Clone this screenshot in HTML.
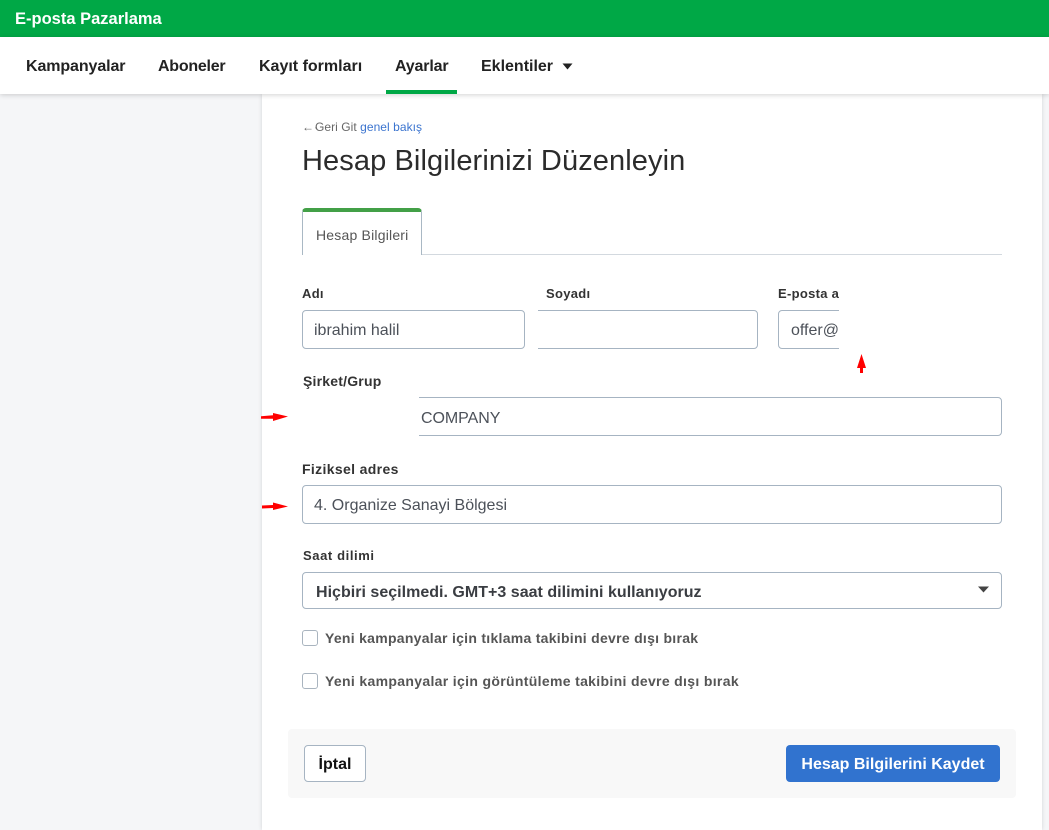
<!DOCTYPE html>
<html lang="tr">
<head>
<meta charset="utf-8">
<title>Hesap Bilgilerinizi Düzenleyin</title>
<style>
html,body{margin:0;padding:0;width:1049px;height:830px;overflow:hidden;background:#f5f6f8;font-family:"Liberation Sans",sans-serif;color:#2b2b2b}
.a{position:absolute;white-space:nowrap}
.panel{position:absolute;left:262px;top:94px;width:780px;height:736px;background:#fff;box-shadow:0 0 4px rgba(0,0,0,.14)}
.top{position:absolute;left:0;top:0;width:1049px;height:37px;background:#00a846}
.nav{position:absolute;left:0;top:37px;width:1049px;height:57px;background:#fff;box-shadow:0 1px 5px rgba(0,0,0,.18)}
.nv{font-size:16px;font-weight:bold;color:#222;top:58px;line-height:18px}
.lb{font-size:13px;font-weight:bold;color:#333;line-height:16px;letter-spacing:.3px}
.in{position:absolute;box-sizing:border-box;border:1px solid #a6b4c2;border-radius:4px;background:#fff;height:39px;font-size:16px;line-height:39px;color:#4c5159;padding-left:11px;white-space:nowrap}
.cb{position:absolute;left:302px;width:16px;height:16px;box-sizing:border-box;border:1px solid #a9b4bf;border-radius:3px;background:#fff}
.cl{font-size:14px;font-weight:bold;color:#555;line-height:16px;left:325px;letter-spacing:.28px}
.cover{position:absolute;background:#fff}
</style>
</head>
<body>
<div class="panel"></div>
<div class="top"></div>
<div class="a" style="left:15px;top:10px;font-size:16.5px;line-height:18px;font-weight:bold;color:#fff">E-posta Pazarlama</div>
<div class="nav"></div>
<div class="a nv" style="left:26px;letter-spacing:-.1px">Kampanyalar</div>
<div class="a nv" style="left:158px;letter-spacing:-.25px">Aboneler</div>
<div class="a nv" style="left:259px">Kayıt formları</div>
<div class="a nv" style="left:395px;letter-spacing:-.15px">Ayarlar</div>
<div class="a nv" style="left:481px">Eklentiler</div>
<svg class="a" style="left:562px;top:63px" width="11" height="7" viewBox="0 0 11 7"><path d="M0.5 0.5H10.5L5.5 6.5Z" fill="#222"/></svg>
<div class="a" style="left:386px;top:90px;width:71px;height:4px;background:#00a846"></div>

<div class="a" style="left:302px;top:120px;font-size:12px;line-height:14px;color:#666">←·</div>
<div class="a" style="left:315px;top:120px;font-size:12px;line-height:14px;color:#666;letter-spacing:.05px">Geri Git <span style="color:#3b74cf">genel bakış</span></div>
<div class="a" style="left:302px;top:144px;font-size:29px;line-height:34px;color:#2b2b2b;letter-spacing:.1px">Hesap Bilgilerinizi Düzenleyin</div>

<div class="a" style="left:302px;top:254px;width:700px;height:1px;background:#d3d9df"></div>
<div class="a" style="left:302px;top:208px;width:120px;height:47px;box-sizing:border-box;background:#fff;border:1px solid #a9b8c4;border-top:4px solid #43a047;border-bottom:none;border-radius:4px 4px 0 0"></div>
<div class="a" style="left:316px;top:228px;font-size:14px;line-height:15px;color:#555;letter-spacing:.2px">Hesap Bilgileri</div>

<div class="a lb" style="left:302px;top:286px">Adı</div>
<div class="a lb" style="left:546px;top:286px">Soyadı</div>
<div class="a lb" style="left:778px;top:286px">E-posta a</div>
<div class="cover" style="left:839px;top:280px;width:20px;height:24px"></div>

<div class="in" style="left:302px;top:310px;width:223px">ibrahim halil</div>
<div class="in" style="left:530px;top:310px;width:228px"></div>
<div class="cover" style="left:525px;top:305px;width:13px;height:50px"></div>
<div class="in" style="left:778px;top:310px;width:100px;padding-left:12px">offer@</div>
<div class="cover" style="left:839px;top:305px;width:50px;height:50px"></div>

<svg class="a" style="left:855px;top:352px" width="13" height="22" viewBox="0 0 13 22"><path d="M6.5 2L11 16H8V21H5V16H2Z" fill="#f00"/></svg>

<div class="a lb" style="left:303px;top:373px;font-size:14px;letter-spacing:.2px">Şirket/Grup</div>
<div class="in" style="left:400px;top:397px;width:602px;padding-left:20px;line-height:41px;letter-spacing:-.05px">COMPANY</div>
<div class="cover" style="left:395px;top:392px;width:24px;height:50px"></div>
<svg class="a" style="left:261px;top:410px" width="28" height="14" viewBox="0 0 28 14"><path d="M0 6.2L12 5.2V3L27 6.5L12 11V8.8L0 8.8Z" fill="#f00"/></svg>

<div class="a lb" style="left:302px;top:461px;font-size:14px;letter-spacing:.35px">Fiziksel adres</div>
<div class="in" style="left:302px;top:485px;width:700px">4. Organize Sanayi Bölgesi</div>
<svg class="a" style="left:262px;top:500px" width="27" height="14" viewBox="0 0 27 14"><path d="M0 5.5L11 5V2.5L26 6.5L11 10V8L0 8.5Z" fill="#f00"/></svg>

<div class="a lb" style="left:303px;top:548px;letter-spacing:.6px">Saat dilimi</div>
<div class="in" style="left:302px;top:572px;width:700px;height:37px;line-height:39px;padding-left:13px;font-weight:bold;color:#3a3d42;letter-spacing:.02px">Hiçbiri seçilmedi. GMT+3 saat dilimini kullanıyoruz</div>
<svg class="a" style="left:978px;top:586px" width="11" height="7" viewBox="0 0 11 7"><path d="M0 0.5H11L5.5 6.5Z" fill="#444"/></svg>

<div class="cb" style="top:630px"></div>
<div class="a cl" style="top:630px">Yeni kampanyalar için tıklama takibini devre dışı bırak</div>
<div class="cb" style="top:673px"></div>
<div class="a cl" style="top:673px;letter-spacing:.33px">Yeni kampanyalar için görüntüleme takibini devre dışı bırak</div>

<div class="a" style="left:288px;top:729px;width:728px;height:69px;background:#f8f8f8;border-radius:4px"></div>
<div class="a" style="left:304px;top:745px;width:62px;height:37px;box-sizing:border-box;background:#fff;border:1px solid #a6b4c2;border-radius:4px;text-align:center;font-size:16px;font-weight:bold;line-height:37px;color:#111">İptal</div>
<div class="a" style="left:786px;top:745px;width:214px;height:37px;background:#3173cf;border-radius:4px;text-align:center;font-size:16px;font-weight:bold;line-height:39px;color:#fff">Hesap Bilgilerini Kaydet</div>
</body>
</html>
